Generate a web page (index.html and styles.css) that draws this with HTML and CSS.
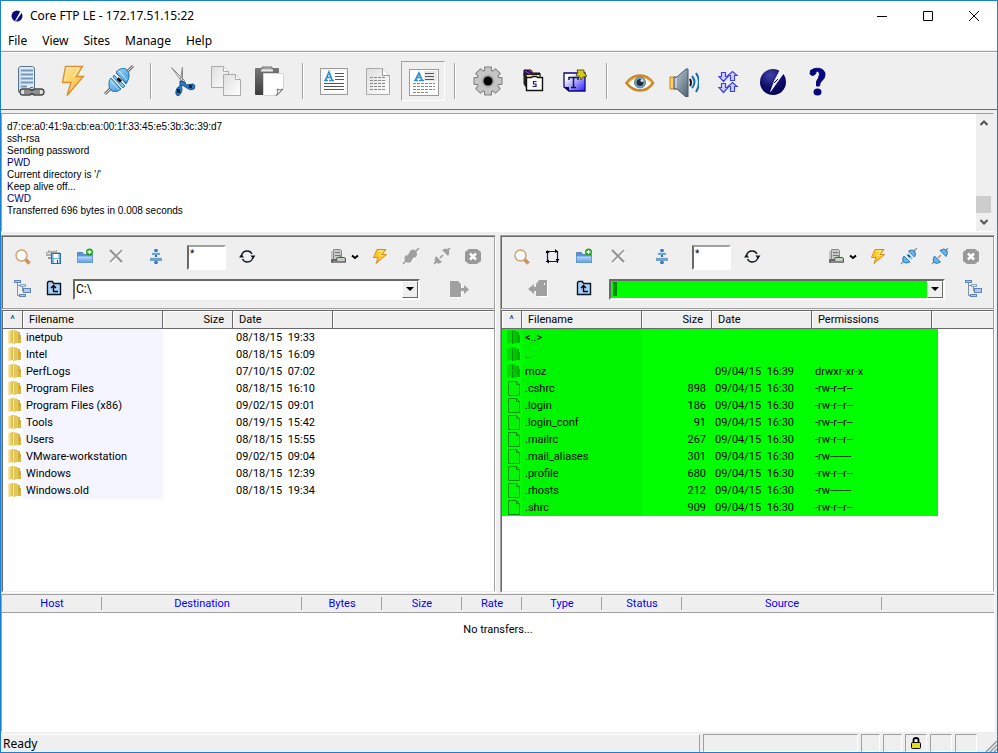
FILE: index.html
```html
<!DOCTYPE html>
<html lang="en">
<head>
<meta charset="utf-8">
<title>Core FTP LE - 172.17.51.15:22</title>
<link rel="stylesheet" href="styles.css">
</head>
<body>
<svg class="defs" aria-hidden="true">
  <defs>
    <linearGradient id="g-gold" x1="0" y1="0" x2="1" y2="1"><stop offset="0" stop-color="#ffe9a0"/><stop offset="1" stop-color="#f5b52c"/></linearGradient>
    <linearGradient id="g-blue" x1="0" y1="0" x2="1" y2="1"><stop offset="0" stop-color="#9ed8fb"/><stop offset="1" stop-color="#3d93dc"/></linearGradient>
    <linearGradient id="g-dark" x1="0" y1="0" x2="0" y2="1"><stop offset="0" stop-color="#777"/><stop offset="1" stop-color="#3c3c3c"/></linearGradient>
    <linearGradient id="g-steel" x1="0" y1="0" x2="1" y2="1"><stop offset="0" stop-color="#c5d0da"/><stop offset="1" stop-color="#4d6072"/></linearGradient>
    <linearGradient id="g-note" x1="0" y1="0" x2="1" y2="1"><stop offset="0.2" stop-color="#ffffff"/><stop offset="1" stop-color="#2a20ff"/></linearGradient>
    <linearGradient id="g-folder" x1="0" y1="0" x2="0" y2="1"><stop offset="0" stop-color="#bfe0ff"/><stop offset="1" stop-color="#5a9be6"/></linearGradient>
    <linearGradient id="g-yfold" x1="0" y1="0" x2="1" y2="0"><stop offset="0" stop-color="#f8eeb0"/><stop offset="1" stop-color="#dcb840"/></linearGradient>
    <linearGradient id="g-page" x1="0" y1="0" x2="1" y2="1"><stop offset="0" stop-color="#dedede"/><stop offset="1" stop-color="#ffffff"/></linearGradient>
    <radialGradient id="g-ball" cx="0.4" cy="0.25" r="0.8"><stop offset="0" stop-color="#4343a8"/><stop offset="0.6" stop-color="#0c0c66"/><stop offset="1" stop-color="#00004a"/></radialGradient>
  </defs>
  <symbol id="i-server" viewBox="0 0 32 32">
    <path d="M3.500 4q0-2 2-2.500h12q2 .5 2 2.500v23h-16z" fill="#dcebf6" stroke="#58728a"/>
    <path d="M6 5.500h12M6 9.500h12M6 13.500h12M6 17.500h12M6 21.500h6" stroke="#7398ba" stroke-width="2"/>
    <path d="M5 26V4" stroke="#b3cfe2"/>
    <rect x="5" y="24" width="12" height="6" rx="3" fill="#ddd" stroke="#444" stroke-width="1.300"/><rect x="17" y="24" width="12" height="6" rx="3" fill="#ddd" stroke="#444" stroke-width="1.300"/>
    <path d="M9 27h16" stroke="#333" stroke-width="3"/><path d="M8 27h18" stroke="#eee"/><path d="M15 22.500h3" stroke="#d33"/>
  </symbol>
  <symbol id="i-bolt" viewBox="0 0 32 32">
    <path d="M6.500 1.500h17l-6 10h7L8 30.500l4-13H3.500z" fill="url(#g-gold)" stroke="#d78f35" stroke-width="1.300"/>
    <path d="M8 3h12l-6 9" fill="none" stroke="#fff3bd"/>
  </symbol>
  <symbol id="i-plug" viewBox="0 0 32 32">
    <path d="M2 29l6-6M24 7l6-6" stroke="#777" stroke-width="3"/><path d="M2 29l6-6M24 7l6-6" stroke="#d9d9d9"/>
    <path d="M8 13l10 11q-4 4-9 2-4-3-3-8 0-3 2-5z" fill="url(#g-blue)" stroke="#2474ae"/>
    <path d="M13 7q5-5 10-3 4 3 3 8-1 4-3 7z" fill="url(#g-blue)" stroke="#2474ae"/>
    <path d="M10 12l1-2 11 11-2 2zM13 8l10 10" fill="#84c8f5" stroke="#2e7db5"/><path d="M8 16l8 9M16 6l8 9" stroke="#c8ebff"/>
    <path d="M14.500 13.500l3.500 3" stroke="#111" stroke-width="3"/>
  </symbol>
  <symbol id="i-cut" viewBox="0 0 32 32">
    <path d="M4.500 2.500l11 15 2-2zM15.500 2v15l-2-2z" fill="#eee" stroke="#8b8b8b"/>
    <path d="M13 16l5 1 1 3 7-1q3 1 1 5-4 2-7-1l-5-3q-1 1 0 5-1 5-4 6-3-1-2-5 0-3 4-5z" fill="#2f7ac8" stroke="#16518c"/>
    <path d="M11 24l1 4M22 21l3 1" stroke="#082238" stroke-width="3"/>
  </symbol>
  <symbol id="i-copy" viewBox="0 0 32 32">
    <path d="M.5 1.500h12l5 5v16H.5z" fill="url(#g-page)" stroke="#aaa"/><path d="M12.500 9.500h12l5 5v16h-17z" fill="url(#g-page)" stroke="#aaa"/>
    <path d="M12.500 1.500v5h5M24.500 9.500v5h5" fill="#fff" stroke="#aaa"/>
  </symbol>
  <symbol id="i-paste" viewBox="0 0 32 32">
    <rect x="0" y="3" width="24" height="27" rx="1" fill="url(#g-dark)"/>
    <path d="M7 2h10v4H7z" fill="#aaa" stroke="#777"/><path d="M6 5.500h12" stroke="#eee" stroke-width="2"/>
    <path d="M8.500 8.500h20v16l-6 6h-14z" fill="#fff" stroke="#d5d5d5"/><path d="M21 31q3-3 1-7 3 2 6 0z" fill="#eee" stroke="#777"/>
  </symbol>
  <symbol id="i-doc1" viewBox="0 0 32 32">
    <rect x="1.500" y="3.500" width="27" height="26" fill="#fff" stroke="#9b9b9b"/><rect x="3" y="5" width="24" height="23" fill="none" stroke="#eee"/>
    <path d="M16 8.500h9M16 11.500h9M16 14.500h9M5 18.500h20M5 21.500h20M5 24.500h20" stroke="#555"/>
    <path d="M5 15.500h4M10 15.500h5M6.500 15L10 7l3 8M8 12.500h4" fill="none" stroke="#2f8fd3" stroke-width="1.700"/>
  </symbol>
  <symbol id="i-doc2" viewBox="0 0 32 32">
    <path d="M3.500 3.500h16l7 7v19h-23z" fill="url(#g-page)" stroke="#aaa"/><path d="M19.500 3.500v7h7" fill="#fff" stroke="#999"/>
    <path d="M7 12.500h16M7 15.500h16M7 18.500h16M7 21.500h16M7 24.500h16" stroke="#888" stroke-dasharray="3 1"/>
  </symbol>
  <symbol id="i-doc3" viewBox="0 0 32 32">
    <rect x="2.500" y="4.500" width="29" height="26" fill="#fff" stroke="#9b9b9b"/><path d="M17 6h13v10H17z" fill="#e9e9e9"/>
    <path d="M18 8.500h9M18 11.500h9M18 14.500h9" stroke="#555"/>
    <path d="M6 18.500h22M6 21.500h22M6 24.500h22M6 27.500h16" stroke="#888" stroke-dasharray="3 1"/>
    <path d="M7 15.500h4M12 15.500h5M8.500 15L12 8l3 7M10 12.500h4" fill="none" stroke="#2f8fd3" stroke-width="1.700"/>
  </symbol>
  <symbol id="i-gear" viewBox="0 0 32 32">
    <g fill="#808080"><circle cx="17" cy="16" r="11.500"/><rect x="13" y="1.500" width="8" height="29" rx="1"/><rect x="13" y="1.500" width="8" height="29" rx="1" transform="rotate(45 17 16)"/><rect x="13" y="1.500" width="8" height="29" rx="1" transform="rotate(90 17 16)"/><rect x="13" y="1.500" width="8" height="29" rx="1" transform="rotate(135 17 16)"/></g>
    <g fill="#c6c6c6"><circle cx="17" cy="16" r="10.500"/><rect x="14" y="2.500" width="6" height="27" rx="1"/><rect x="14" y="2.500" width="6" height="27" rx="1" transform="rotate(45 17 16)"/><rect x="14" y="2.500" width="6" height="27" rx="1" transform="rotate(90 17 16)"/><rect x="14" y="2.500" width="6" height="27" rx="1" transform="rotate(135 17 16)"/></g>
    <circle cx="17" cy="16" r="6.500" fill="#a8a8a8"/><circle cx="17" cy="16" r="4.500" fill="#000"/>
  </symbol>
  <symbol id="i-card" viewBox="0 0 32 32">
    <path d="M9 5h7l2 3h7v3H9z" fill="#14149a" stroke="#111"/><path d="M10 6l5 3M14 5l5 3" stroke="#e33"/><path d="M11 9.500h14v4H11z" fill="#ffe9a0" stroke="#222"/>
    <path d="M8.500 8v11l4 6V12z" fill="#222"/><path d="M11.500 12.500h5l1-1h4l1 1h5v13h-16z" fill="#fff" stroke="#111" stroke-width="1.400"/>
    <path d="M21.500 16.500h-3v2.500h2.500v2.500h-3.500" fill="none" stroke="#1818a8" stroke-width="1.200"/>
  </symbol>
  <symbol id="i-note" viewBox="0 0 32 32">
    <path d="M5 8h21v18H10l-5-4z" fill="url(#g-note)" stroke="#090979" stroke-width="1.300"/><path d="M5 22l5 4v-4z" fill="#070745"/>
    <path d="M10 15v-2.500h9V15M14.500 12.500v10M12 22.500h5" fill="none" stroke="#14145c" stroke-width="1.500"/>
    <path d="M18 5h7v3l3 3-4 1-2 3-1-3-4-2 2-2z" fill="#d6c91e" stroke="#625b0b"/>
  </symbol>
  <symbol id="i-eye" viewBox="0 0 32 32">
    <path d="M3.500 18Q9 10.500 17 10.500q8 0 13 7.500-5 7.500-13 7.500T3.500 18z" fill="#fff" stroke="#c98526" stroke-width="2.500"/><path d="M5 17.500Q10 12 17 12q7 0 12 5.500" fill="none" stroke="#f0a52f" stroke-width="1.500"/>
    <circle cx="17" cy="17.500" r="5.500" fill="#7fa9bf" stroke="#517e95"/><circle cx="17" cy="17.500" r="3.500" fill="#222d3c"/><circle cx="19" cy="15.500" r="1.500" fill="#dde"/>
  </symbol>
  <symbol id="i-sound" viewBox="0 0 32 32">
    <path d="M3 12h5v12H3z" fill="#fbd36b" stroke="#c68416"/><path d="M7 12h3l9-8h2v28h-2l-9-8H7z" fill="url(#g-steel)" stroke="#44576a"/><path d="M9 13v10" stroke="#e5edf3"/>
    <path d="M25 11q5 6 0 12M29 8q6 9 0 19" fill="none" stroke="#1670b4" stroke-width="2"/><path d="M23 14q2 4 0 7" fill="none" stroke="#111" stroke-width="2"/>
  </symbol>
  <symbol id="i-xfer" viewBox="0 0 32 32">
    <path d="M10.500 7.500h4v4h2.500l-4.500 5L8 11.500h2.500zM19.500 15.500v-5H17l4.500-4 4.500 4h-2.500v5zM10.500 18.500h4v4h2.500l-4.500 5-4.500-5h2.500zM19.500 26.500v-5H17l4.500-4 4.500 4h-2.500v5z" fill="#cfd2ff" stroke="#3b42ec" stroke-width="1.200"/>
  </symbol>
  <symbol id="i-ball" viewBox="0 0 32 32">
    <circle cx="18" cy="17" r="13" fill="url(#g-ball)"/><path d="M25.500 3.500l4 4L22 18l-6 8.500-1 .5 4-11z" fill="#f4f4ff"/><path d="M23 14l-4 4" stroke="#0c0c66"/>
  </symbol>
  <symbol id="i-help" viewBox="0 0 32 32">
    <path d="M11.500 5.500q6-4 12-1 4 3 2 8-1 2-3 3.500-2 2-2 5h-3q-1-5 2-8 2-4 0-7-3-.5-3 3-3 3-5.500 0z" fill="#07077c" stroke="#07077c"/><ellipse cx="18.500" cy="27" rx="4" ry="3.500" fill="#07077c"/>
  </symbol>
  <symbol id="s-find" viewBox="0 0 18 18">
    <path d="M11.500 11.500l4 4" stroke="#c8935e" stroke-width="3.500"/><circle cx="7.500" cy="7.500" r="5.500" fill="#f9fbff" stroke="#d1a172" stroke-width="1.400"/>
  </symbol>
  <symbol id="s-save" viewBox="0 0 18 18">
    <path d="M3 2h9v2h3v4H1V4h2z" fill="#aaa"/><path d="M2 5.500h12M4 2.500h7" stroke="#e8e8e8"/><path d="M3 10h4" stroke="#999" stroke-width="2"/>
    <rect x="6.500" y="5.500" width="9" height="10" fill="#6db7e8" stroke="#2a6f9f"/><rect x="8.500" y="6" width="5" height="4" fill="#fff"/><rect x="9" y="11" width="5" height="4" fill="#e8f4ff"/><path d="M12.500 12v3" stroke="#246"/>
  </symbol>
  <symbol id="s-folder" viewBox="0 0 18 18">
    <path d="M1.500 14.500v-10h5l1 2h9v8z" fill="#5b92cf" stroke="#5487bd"/><path d="M1.500 14.500V8h15v6.500z" fill="url(#g-folder)" stroke="#669cd5"/>
    <circle cx="13.500" cy="4" r="3.500" fill="#20a51c"/><path d="M13.500 2v4M11.500 4h4" stroke="#fff" stroke-width="1.300"/>
  </symbol>
  <symbol id="s-x" viewBox="0 0 18 18">
    <path d="M4 4l12 12M16 4L4 16" stroke="#fff"/><path d="M3 2l12 12" stroke="#909090" stroke-width="2"/><path d="M15 2L3 14" stroke="#999" stroke-width="1.700"/>
  </symbol>
  <symbol id="s-align" viewBox="0 0 18 18">
    <path d="M10 1v15" stroke="#3564dc" stroke-width="2"/><path d="M8 2.500h4M8 14.500h4" stroke="#4c78da" stroke-width="2"/><rect x="6" y="4" width="8" height="3" fill="#6ea4ca"/><rect x="4" y="9" width="12" height="4" fill="#6ea4ca"/><path d="M6 4.500h8M4 9.500h12" stroke="#c8e6f6"/>
  </symbol>
  <symbol id="s-refresh" viewBox="0 0 18 18">
    <path d="M3.500 8q.5-5 6-5 3 0 4.500 3M15 8.500q-.5 5.500-6 5.500-3 0-4.500-3" fill="none" stroke="#0c1a20" stroke-width="1.400"/><path d="M1 9.500L3.500 6 6 9.500zM12.500 7.500h5L15 11z" fill="#0c1a20"/>
  </symbol>
  <symbol id="s-server" viewBox="0 0 18 18">
    <path d="M4.500 1.500h7l1 1v11h-8z" fill="#c8c8c8" stroke="#888"/><path d="M6 4.500h5M6 7.500h5" stroke="#777"/><path d="M11 7h2v3h-2z" fill="#58a858"/><path d="M3 3v9" stroke="#999"/><rect x="2" y="11" width="15" height="4" rx="1" fill="#666"/><rect x="7.500" y="9.500" width="9" height="4" rx="1.500" fill="#ccc" stroke="#555"/><path d="M4 14h12" stroke="#aaa"/>
  </symbol>
  <symbol id="s-bolt" viewBox="0 0 18 18">
    <path d="M6 1.500h9L11 6.500h4.500L5 15.500l2-6H2.500z" fill="#ffc72e" stroke="#d58a1e"/><path d="M7 3h5L8 7.500h4" fill="none" stroke="#fff2a0"/>
  </symbol>
  <symbol id="s-plug" viewBox="0 0 18 18">
    <path d="M1 16l4-4M13 4l4-4" stroke="#999" stroke-width="1.500"/><path d="M4 8l6 6q-4 2-6.500 0-2-3 .5-6zM8.500 3q3-2 6 0 2 3 0 6z" fill="#63b6ef" stroke="#2b7ab4"/><path d="M7 6l5 5" stroke="#8dcef8" stroke-width="3"/><path d="M8 7l2 2" stroke="#235" stroke-width="1.500"/>
  </symbol>
  <symbol id="s-unplug" viewBox="0 0 18 18">
    <path d="M1 16l3-3M14 3l3-3M7 10l3-3" stroke="#999" stroke-width="1.500"/><path d="M3.500 8l6 6q-4 3-7 0-1-3 1-6zM9 2.500q4-3 7 0 1 3-1 6z" fill="#63b6ef" stroke="#2b7ab4"/>
  </symbol>
  <symbol id="s-plug-off" viewBox="0 0 18 18">
    <path d="M2 17l4-4M14 6l3-3M9 14l4-4" stroke="#fff"/><path d="M1 16l4-4M13 4l4-4" stroke="#999" stroke-width="1.500"/><path d="M3 8l3-1 2-4q3-3 6 0 2 3 0 6l-3 1-2 4q-4 2-6-1-1-2 0-5z" fill="#a0a0a0"/>
  </symbol>
  <symbol id="s-unplug-off" viewBox="0 0 18 18">
    <path d="M2 17l3-3M15 5l2-3" stroke="#fff"/><path d="M1 16l3-3M14 3l3-3M7 10l3-3" stroke="#999" stroke-width="1.500"/><path d="M3 8l6 6q-4 3-7 0-1-3 1-6zM9 2q5-3 7 0 1 3-1 6z" fill="#a0a0a0"/>
  </symbol>
  <symbol id="s-stop" viewBox="0 0 18 18">
    <path d="M5 1h8l4 3v9l-4 3H5l-4-3V4z" fill="#999"/><path d="M6 5.500l6 6M12 5.500l-6 6" stroke="#fff" stroke-width="2.500"/>
  </symbol>
  <symbol id="s-tree" viewBox="0 0 18 18">
    <path d="M3.500 2v13.500H7M3.500 5.500h5M8.500 7v4H12" fill="none" stroke="#7b93ad"/><rect x=".5" y=".5" width="6" height="2" fill="#a9cbf5" stroke="#6284b2"/><rect x="6.500" y="4.500" width="5" height="2" fill="#d6e6fa" stroke="#8ba6c6"/><rect x="9.500" y="8.500" width="7" height="4" fill="#a9cbf5" stroke="#6284b2"/><rect x="5.500" y="14.500" width="6" height="2" fill="#a9cbf5" stroke="#6284b2"/>
  </symbol>
  <symbol id="s-up" viewBox="0 0 18 18">
    <path d="M2.500 14.500v-12l1-1h4l1 2h7v11z" fill="#a6d1fb" stroke="#0a1420" stroke-width="1.400"/><path d="M8 11.500h5M8.500 11.500V6M6 8l2.500-2.500L11 8" fill="none" stroke="#000" stroke-width="1.400"/>
  </symbol>
  <symbol id="s-send" viewBox="0 0 22 18">
    <path d="M2 2h8l3 3v13H2z" fill="#fff"/><path d="M1 1h8l3 3v4h3V5l5 4.500-5 4.500v-3h-3v6H1z" fill="#a0a0a0"/>
  </symbol>
  <symbol id="s-get" viewBox="0 0 22 18">
    <path d="M11 2h10v15H11z" fill="#fff"/><path d="M20 0h-8L9 4v3H7V4L1 9l6 5v-3h2v5h11z" fill="#a0a0a0"/><path d="M17.500 3v2" stroke="#fff"/>
  </symbol>
  <symbol id="s-crop" viewBox="0 0 18 18">
    <path d="M2 3.500h12M13.500 3v12M13 13.500H2M3.500 14V3" fill="none" stroke="#10107a" stroke-width="1.200"/><path d="M1.500 5l2-3 2 3zM11 1v4l3-1.500zM11.500 11h4l-2 3zM5 11.500v4l-3-2z" fill="#000"/>
  </symbol>
  <symbol id="f-dir" viewBox="0 0 14 16">
    <path d="M0 1l5-1v13l-5 1z" fill="url(#g-yfold)"/><path d="M5 0l5 1v12l-5 1z" fill="#e3c658"/><path d="M10 2h2v3h1v8h-3z" fill="#d8b542"/><path d="M5.500 1v12" stroke="#f7ecb4"/><path d="M11.500 5v4" stroke="#8ba9b5"/>
  </symbol>
  <symbol id="f-dir-new" viewBox="0 0 14 16">
    <path d="M0 1l5-1v13l-5 1z" fill="#04d904"/><path d="M5 0l5 1v12l-5 1z" fill="#02c402"/><path d="M10 2h2v3h1v8h-3z" fill="#02ae02"/><path d="M5.500 2v12" stroke="#029402"/>
  </symbol>
  <symbol id="f-file" viewBox="0 0 14 16">
    <path d="M1.500.5h8l3 3v11h-11z" fill="#02f602" stroke="#028c02"/><path d="M9.500.5v3h3" fill="none" stroke="#028c02"/>
  </symbol>
  <symbol id="a-down" viewBox="0 0 8 8"><path d="M0 2h8L4 6z" fill="#000"/></symbol>
</svg>

<div class="window">
  <header class="titlebar">
    <svg class="app-icon" viewBox="0 0 12 12"><circle cx="6" cy="6" r="5.500" fill="#0c0c80"/><path d="M9.500 1l1.500 1.500L5 11H4z" fill="#fff"/></svg>
    <h1>Core FTP LE - 172.17.51.15:22</h1>
    <div class="window-buttons">
      <button aria-label="Minimize"><svg viewBox="0 0 12 12"><path d="M1 6.500h10" stroke="#000"/></svg></button>
      <button aria-label="Maximize"><svg viewBox="0 0 12 12"><path d="M1.500 1.500h9v9h-9z" fill="none" stroke="#000"/></svg></button>
      <button aria-label="Close"><svg viewBox="0 0 12 12"><path d="M1 1l10 10M11 1L1 11" stroke="#000"/></svg></button>
    </div>
  </header>
  <nav class="menu">
    <button>File</button><button>View</button><button>Sites</button><button>Manage</button><button>Help</button>
  </nav>

  <div class="toolbar">
    <button aria-label="Site manager"><svg><use href="#i-server"/></svg></button>
    <button aria-label="Quick connect"><svg><use href="#i-bolt"/></svg></button>
    <button aria-label="Connect"><svg><use href="#i-plug"/></svg></button>
    <span class="sep"></span>
    <button aria-label="Cut"><svg><use href="#i-cut"/></svg></button>
    <button aria-label="Copy"><svg><use href="#i-copy"/></svg></button>
    <button aria-label="Paste"><svg><use href="#i-paste"/></svg></button>
    <span class="sep"></span>
    <button aria-label="ASCII mode"><svg><use href="#i-doc1"/></svg></button>
    <button aria-label="Binary mode"><svg><use href="#i-doc2"/></svg></button>
    <button aria-label="Automatic mode" aria-pressed="true"><svg><use href="#i-doc3"/></svg></button>
    <span class="sep"></span>
    <button aria-label="Settings"><svg><use href="#i-gear"/></svg></button>
    <button aria-label="Scheduler"><svg><use href="#i-card"/></svg></button>
    <button aria-label="Templates"><svg><use href="#i-note"/></svg></button>
    <span class="sep"></span>
    <button aria-label="View"><svg><use href="#i-eye"/></svg></button>
    <button aria-label="Sound"><svg><use href="#i-sound"/></svg></button>
    <button aria-label="Transfers"><svg><use href="#i-xfer"/></svg></button>
    <button aria-label="About"><svg><use href="#i-ball"/></svg></button>
    <button aria-label="Help"><svg><use href="#i-help"/></svg></button>
  </div>

  <section class="log" aria-label="Session log">
    <div class="log-lines">
      <p>d7:ce:a0:41:9a:cb:ea:00:1f:33:45:e5:3b:3c:39:d7</p>
      <p>ssh-rsa</p>
      <p>Sending password</p>
      <p class="command">PWD</p>
      <p>Current directory is '/'</p>
      <p>Keep alive off...</p>
      <p class="command">CWD</p>
      <p>Transferred 696 bytes in 0.008 seconds</p>
    </div>
    <div class="scrollbar">
      <svg viewBox="0 0 8 6"><path d="M.5 5L4 1.500 7.500 5" fill="none" stroke="#555" stroke-width="2"/></svg>
      <span class="thumb"></span>
      <svg viewBox="0 0 8 6"><path d="M.5 1L4 4.500 7.500 1" fill="none" stroke="#555" stroke-width="2"/></svg>
    </div>
  </section>

  <main class="panes">
    <section class="pane local" aria-label="Local files">
      <div class="pane-tools">
        <div class="tool-row">
          <button aria-label="Find"><svg><use href="#s-find"/></svg></button>
          <button aria-label="Save listing"><svg><use href="#s-save"/></svg></button>
          <button aria-label="New folder"><svg><use href="#s-folder"/></svg></button>
          <button aria-label="Delete"><svg><use href="#s-x"/></svg></button>
          <button class="align" aria-label="Synchronize"><svg><use href="#s-align"/></svg></button>
          <input class="filter" type="text" value="*" aria-label="Filter">
          <button class="refresh" aria-label="Refresh"><svg><use href="#s-refresh"/></svg></button>
          <span class="spacer"></span>
          <button class="sites" aria-label="Sites"><svg><use href="#s-server"/></svg><svg class="chevron" viewBox="0 0 8 8"><path d="M1 2.500l3 2.500 3-2.500" fill="none" stroke="#000" stroke-width="2"/></svg></button>
          <button aria-label="Quick connect"><svg><use href="#s-bolt"/></svg></button>
          <button aria-label="Connect"><svg><use href="#s-plug-off"/></svg></button>
          <button aria-label="Disconnect"><svg><use href="#s-unplug-off"/></svg></button>
          <button aria-label="Stop"><svg><use href="#s-stop"/></svg></button>
        </div>
        <div class="tool-row">
          <button aria-label="Tree"><svg><use href="#s-tree"/></svg></button>
          <button aria-label="Up one folder"><svg><use href="#s-up"/></svg></button>
          <div class="combo"><select aria-label="Local path"><option>C:\</option></select><span class="drop"><svg><use href="#a-down"/></svg></span></div>
          <button class="send" aria-label="Upload"><svg class="wide"><use href="#s-send"/></svg></button>
        </div>
      </div>
      <div class="list">
        <table>
          <colgroup><col class="c-icon"><col class="c-name"><col class="c-size"><col class="c-date"><col></colgroup>
          <thead><tr><th class="sort">^</th><th>Filename</th><th class="num">Size</th><th>Date</th><th></th></tr></thead>
          <tbody>
            <tr><td><svg><use href="#f-dir"/></svg></td><td>inetpub</td><td></td><td>08/18/15  19:33</td><td></td></tr>
            <tr><td><svg><use href="#f-dir"/></svg></td><td>Intel</td><td></td><td>08/18/15  16:09</td><td></td></tr>
            <tr><td><svg><use href="#f-dir"/></svg></td><td>PerfLogs</td><td></td><td>07/10/15  07:02</td><td></td></tr>
            <tr><td><svg><use href="#f-dir"/></svg></td><td>Program Files</td><td></td><td>08/18/15  16:10</td><td></td></tr>
            <tr><td><svg><use href="#f-dir"/></svg></td><td>Program Files (x86)</td><td></td><td>09/02/15  09:01</td><td></td></tr>
            <tr><td><svg><use href="#f-dir"/></svg></td><td>Tools</td><td></td><td>08/19/15  15:42</td><td></td></tr>
            <tr><td><svg><use href="#f-dir"/></svg></td><td>Users</td><td></td><td>08/18/15  15:55</td><td></td></tr>
            <tr><td><svg><use href="#f-dir"/></svg></td><td>VMware-workstation</td><td></td><td>09/02/15  09:04</td><td></td></tr>
            <tr><td><svg><use href="#f-dir"/></svg></td><td>Windows</td><td></td><td>08/18/15  12:39</td><td></td></tr>
            <tr><td><svg><use href="#f-dir"/></svg></td><td>Windows.old</td><td></td><td>08/18/15  19:34</td><td></td></tr>
          </tbody>
        </table>
      </div>
    </section>

    <section class="pane remote" aria-label="Remote files">
      <div class="pane-tools">
        <div class="tool-row">
          <button aria-label="Find"><svg><use href="#s-find"/></svg></button>
          <button aria-label="Select"><svg><use href="#s-crop"/></svg></button>
          <button aria-label="New folder"><svg><use href="#s-folder"/></svg></button>
          <button class="delete" aria-label="Delete"><svg><use href="#s-x"/></svg></button>
          <button class="align" aria-label="Synchronize"><svg><use href="#s-align"/></svg></button>
          <input class="filter" type="text" value="*" aria-label="Filter">
          <button class="refresh" aria-label="Refresh"><svg><use href="#s-refresh"/></svg></button>
          <span class="spacer"></span>
          <button class="sites" aria-label="Sites"><svg><use href="#s-server"/></svg><svg class="chevron" viewBox="0 0 8 8"><path d="M1 2.500l3 2.500 3-2.500" fill="none" stroke="#000" stroke-width="2"/></svg></button>
          <button aria-label="Quick connect"><svg><use href="#s-bolt"/></svg></button>
          <button aria-label="Connect"><svg><use href="#s-plug"/></svg></button>
          <button aria-label="Disconnect"><svg><use href="#s-unplug"/></svg></button>
          <button class="stop" aria-label="Stop"><svg><use href="#s-stop"/></svg></button>
        </div>
        <div class="tool-row">
          <button class="get" aria-label="Download"><svg class="wide"><use href="#s-get"/></svg></button>
          <button class="up" aria-label="Up one folder"><svg><use href="#s-up"/></svg></button>
          <div class="combo marked"><span class="caret"></span><select aria-label="Remote path"><option></option></select><span class="drop"><svg><use href="#a-down"/></svg></span></div>
          <button class="tree" aria-label="Tree"><svg><use href="#s-tree"/></svg></button>
        </div>
      </div>
      <div class="list">
        <table>
          <colgroup><col class="c-icon"><col class="c-name-narrow"><col class="c-size"><col class="c-date"><col class="c-perm"><col></colgroup>
          <thead><tr><th class="sort">^</th><th>Filename</th><th class="num">Size</th><th>Date</th><th>Permissions</th><th></th></tr></thead>
          <tbody>
            <tr><td><svg><use href="#f-dir-new"/></svg></td><td>&lt;..&gt;</td><td></td><td></td><td></td><td></td></tr>
            <tr><td><svg><use href="#f-dir-new"/></svg></td><td>..</td><td></td><td></td><td></td><td></td></tr>
            <tr><td><svg><use href="#f-dir-new"/></svg></td><td>moz</td><td></td><td>09/04/15  16:39</td><td>drwxr-xr-x</td><td></td></tr>
            <tr><td><svg><use href="#f-file"/></svg></td><td>.cshrc</td><td>898</td><td>09/04/15  16:30</td><td>-rw-r--r--</td><td></td></tr>
            <tr><td><svg><use href="#f-file"/></svg></td><td>.login</td><td>186</td><td>09/04/15  16:30</td><td>-rw-r--r--</td><td></td></tr>
            <tr><td><svg><use href="#f-file"/></svg></td><td>.login_conf</td><td>91</td><td>09/04/15  16:30</td><td>-rw-r--r--</td><td></td></tr>
            <tr><td><svg><use href="#f-file"/></svg></td><td>.mailrc</td><td>267</td><td>09/04/15  16:30</td><td>-rw-r--r--</td><td></td></tr>
            <tr><td><svg><use href="#f-file"/></svg></td><td>.mail_aliases</td><td>301</td><td>09/04/15  16:30</td><td>-rw-------</td><td></td></tr>
            <tr><td><svg><use href="#f-file"/></svg></td><td>.profile</td><td>680</td><td>09/04/15  16:30</td><td>-rw-r--r--</td><td></td></tr>
            <tr><td><svg><use href="#f-file"/></svg></td><td>.rhosts</td><td>212</td><td>09/04/15  16:30</td><td>-rw-------</td><td></td></tr>
            <tr><td><svg><use href="#f-file"/></svg></td><td>.shrc</td><td>909</td><td>09/04/15  16:30</td><td>-rw-r--r--</td><td></td></tr>
          </tbody>
        </table>
      </div>
    </section>
  </main>

  <section class="queue" aria-label="Transfer queue">
    <table>
      <colgroup><col class="q-host"><col class="q-path"><col class="q-mid"><col class="q-mid"><col class="q-rate"><col class="q-mid"><col class="q-mid"><col class="q-path"><col></colgroup>
      <thead><tr><th>Host</th><th>Destination</th><th>Bytes</th><th>Size</th><th>Rate</th><th>Type</th><th>Status</th><th>Source</th><th></th></tr></thead>
      <tbody><tr><td colspan="9">No transfers...</td></tr></tbody>
    </table>
  </section>

  <footer class="status">
    <span class="message">Ready</span>
    <span class="cell info"></span>
    <span class="cell"></span>
    <span class="cell"></span>
    <span class="cell mid"><svg viewBox="0 0 10 12"><path d="M2.500 6V3q0-2 2.500-2t2.500 2v3" fill="none" stroke="#000" stroke-width="1.800"/><rect x=".5" y="5.500" width="9" height="6" rx="1" fill="#e2df1a" stroke="#000"/></svg></span>
    <span class="cell mid"></span>
    <span class="cell mid"></span>
    <svg class="grip" viewBox="0 0 12 12"><path d="M1 12L12 1M5 12l7-7M9 12l3-3" stroke="#999" stroke-width="1.500"/></svg>
  </footer>
</div>
</body>
</html>
```

FILE: styles.css
```css
:root {
  --face: #efefef;
  --shade: #a0a0a0;
  --dark: #696969;
  --frame: #1b80d2;
  --ui: "Noto Sans", sans-serif;
  --list: Roboto, "Liberation Sans", sans-serif;
  --log: "Liberation Sans", sans-serif;
}

* { box-sizing: border-box; }

body {
  margin: 0;
  background: var(--face);
  color: #000;
  font: 11px/17px var(--list);
}

button {
  display: flex;
  align-items: center;
  justify-content: center;
  margin: 0;
  padding: 0;
  border: 0;
  background: none;
  color: inherit;
  font: inherit;
}

p, h1 { margin: 0; font: inherit; }
svg { display: block; flex: none; }
.defs { position: absolute; width: 0; height: 0; }

.window {
  display: flex;
  flex-direction: column;
  min-height: 100vh;
  border: 1px solid var(--frame);
}

/* Title and menu */
.titlebar {
  display: flex;
  align-items: center;
  height: 29px;
  padding-left: 10px;
  background: #fff;
  font: 12px/18px var(--ui);
}
.app-icon { width: 12px; height: 12px; margin-right: 7px; }
.window-buttons { display: flex; margin-left: auto; }
.window-buttons button { width: 46px; height: 28px; }
.window-buttons svg { width: 12px; height: 12px; }

.menu {
  display: flex;
  gap: 15px;
  height: 21px;
  padding: 2px 0 0 7px;
  background: #fff;
  border-bottom: 1px solid var(--face);
  font: 12px/18px var(--ui);
}

/* Main toolbar */
.toolbar {
  display: flex;
  align-items: center;
  height: 59px;
  padding-left: 8px;
  border-top: 1px solid var(--shade);
  border-bottom: 1px solid var(--dark);
  box-shadow: inset 0 1px #fff;
}
.toolbar button { width: 44px; height: 40px; border: 1px solid transparent; }
.toolbar button[aria-pressed="true"] {
  border-color: var(--shade) #fff #fff var(--shade);
}
.toolbar svg { width: 32px; height: 32px; }
.sep {
  width: 2px;
  height: 36px;
  margin: 0 9px;
  border-left: 1px solid var(--shade);
  border-right: 1px solid #fff;
}

/* Session log */
.log {
  display: flex;
  height: 119px;
  margin: 3px 3px 0 0;
  border: 1px solid;
  border-color: var(--shade) var(--face) #fff var(--shade);
  background: #fff;
}
.log-lines { flex: 1; padding: 7px 5px 0; font: 10px/12px var(--log); }
.command { color: #00007c; }
.scrollbar {
  display: flex;
  flex-direction: column;
  align-items: center;
  width: 17px;
  padding: 6px 2px 6px 0;
  background: var(--face);
}
.scrollbar svg { width: 8px; height: 6px; }
.thumb { width: 15px; height: 17px; margin: auto 0 6px; background: #cdcdcd; }

/* File panes */
.panes {
  display: grid;
  flex: 1;
  grid-template-columns: 1fr 1fr;
  gap: 4px;
  margin: 3px 2px 0 0;
}
.pane {
  display: flex;
  flex-direction: column;
  border: 1px solid;
  border-color: var(--shade) #fff #fff var(--shade);
}
.pane-tools {
  display: flex;
  flex-direction: column;
  height: 73px;
  padding: 4px 6px 0 4px;
  border: 1px solid;
  border-color: var(--dark) var(--shade) var(--shade) var(--dark);
}
.tool-row { display: flex; align-items: center; height: 32px; }
.tool-row button { width: 31px; height: 28px; }
.tool-row svg { width: 18px; height: 18px; }
.tool-row svg.wide { width: 22px; }
.spacer { flex: 1; }
.tool-row .sites { width: 40px; gap: 4px; }
.tool-row svg.chevron { width: 8px; height: 8px; }
.tool-row .align { margin: 0 17px 0 8px; }
.filter {
  width: 39px;
  height: 25px;
  margin: 0 5px 0 0;
  padding: 0 1px 8px;
  border: 2px solid;
  border-color: var(--shade) #fff #fff var(--dark);
  border-radius: 0;
  background: #fff;
  font: 10px/12px var(--list);
}
.remote .pane-tools { padding-right: 4px; }
.remote .stop { margin-right: 3px; }
.remote .delete { margin-left: 3px; }
.remote .align { margin: 0 16px 0 12px; }

.combo {
  position: relative;
  flex: 1;
  height: 21px;
  border: 2px solid;
  border-color: var(--dark) #fff #fff var(--dark);
  background: #fff;
}
.combo select {
  width: 100%;
  height: 17px;
  padding: 0 20px 0 1px;
  border: 0;
  border-radius: 0;
  appearance: none;
  background: none;
  color: #000;
  font: 12px/17px var(--list);
}
.drop {
  position: absolute;
  top: 0;
  right: 0;
  display: flex;
  align-items: center;
  justify-content: center;
  width: 16px;
  height: 17px;
  border: 1px solid;
  border-color: #fff var(--dark) var(--dark) #fff;
  background: var(--face);
  pointer-events: none;
}
.tool-row .drop svg { width: 8px; height: 8px; }
.local .combo { margin: 0 24px 0 4px; }
.local .send { margin-right: 13px; }
.remote .get { margin-left: 16px; }
.remote .up { margin-left: 15px; }
.remote .combo { margin: 0 13px 0 10px; }
.marked { background: #00ff00; }
.caret { position: absolute; top: 1px; left: 2px; width: 4px; height: 14px; background: #008c00; }

.list {
  flex: 1;
  margin-top: 1px;
  border: 1px solid;
  border-color: var(--dark) var(--shade) var(--face) var(--dark);
  background: #fff;
}
table { width: 100%; border-collapse: separate; border-spacing: 0; table-layout: fixed; }
th, td { padding: 0; font-weight: normal; text-align: left; white-space: pre; }
.c-icon { width: 20px; }
.c-name { width: 140px; }
.c-name-narrow, .c-perm { width: 120px; }
.c-size { width: 70px; }
.c-date { width: 100px; }

.list th {
  height: 18px;
  padding: 0 6px;
  border-right: 1px solid var(--dark);
  border-bottom: 1px solid var(--dark);
  background: var(--face);
  box-shadow: inset 1px 1px #fff;
  line-height: 17px;
}
.list th.num { padding-right: 8px; text-align: right; }
.list th.sort { padding: 0; text-align: center; color: #004a8f; }
.list th:last-child { border-right: 0; }
.list td { height: 17px; padding-left: 3px; }
.list td:first-child { padding-left: 5px; }
.list td svg { width: 14px; height: 16px; }
.list td:nth-child(2) { background: #f5f5ff; }
.list td:nth-child(3) { padding-right: 6px; text-align: right; }
.remote tbody td { background: #00ff00; }
.remote tbody td:nth-child(2) { background: #00f500; }
.remote tbody td:last-child { background: linear-gradient(#00ff00 0 0) 0 0 / 6px 100% no-repeat; }

/* Transfer queue */
.queue {
  height: 138px;
  margin: 1px 2px 2px 0;
  border: 1px solid;
  border-color: var(--shade) #fff #fff var(--shade);
  background: #fff;
}
.q-host { width: 100px; }
.q-path { width: 200px; }
.q-mid { width: 80px; }
.q-rate { width: 60px; }
.queue th {
  height: 18px;
  border-bottom: 1px solid var(--shade);
  background: linear-gradient(var(--shade) 0 0) 100% 2px / 1px 13px no-repeat var(--face);
  color: #0000ff;
  line-height: 17px;
  text-align: center;
}
.queue th:last-child { background: var(--face); }
.queue td { padding-top: 8px; text-align: center; }

/* Status bar */
.status {
  display: flex;
  gap: 3px;
  height: 18px;
  font: 12px/18px var(--ui);
}
.message { flex: 1; padding-left: 2px; border-top: 1px solid #fff; border-right: 1px solid var(--shade); line-height: 17px; }
.cell {
  display: flex;
  align-items: center;
  justify-content: center;
  width: 19px;
  border: 1px solid;
  border-color: var(--shade) #fff #fff var(--shade);
}
.cell.info { width: 155px; }
.cell.mid { width: 22px; }
.cell svg { width: 10px; height: 12px; }
.grip { width: 12px; height: 12px; margin: auto 0 0 5px; }
```
